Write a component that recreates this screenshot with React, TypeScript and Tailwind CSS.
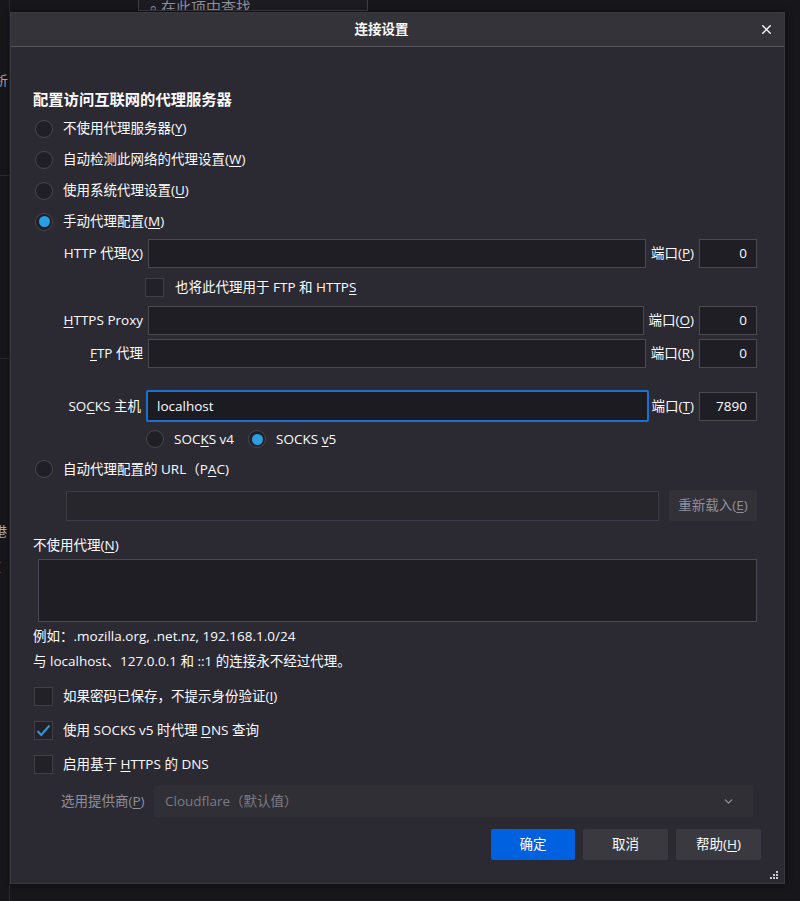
import React from "react";
import { X, ChevronDown } from "lucide-react";

const font = "font-['Open_Sans','Noto_Sans_CJK_SC',sans-serif]";

function Radio({ checked }: { checked?: boolean }) {
  return (
    <span className="flex h-[18px] w-[18px] shrink-0 items-center justify-center rounded-full border border-[#48474e] bg-[#201f26]">
      {checked && <span className="h-[11px] w-[11px] rounded-full bg-[#2a9fe4]" />}
    </span>
  );
}

function Checkbox({ checked }: { checked?: boolean }) {
  return (
    <span className="flex h-[19px] w-[19px] shrink-0 items-center justify-center border border-[#403f46] bg-[#222127]">
      {checked && (
        <svg width="15" height="13" viewBox="0 0 15 13" fill="none">
          <path d="M1.5 7 L5.2 11 L13.5 1.5" stroke="#2f97d8" strokeWidth="2" />
        </svg>
      )}
    </span>
  );
}

function Input({ value, right, className = "" }: { value?: string; right?: boolean; className?: string }) {
  return (
    <div
      className={`flex h-[29px] items-center border border-[#4a4950] bg-[#1f1e25] px-[9px] text-[13.5px] text-[#fbfbfe] ${
        right ? "justify-end" : ""
      } ${className}`}
    >
      {value}
    </div>
  );
}

function ProxyRow({
  label,
  port,
  value,
  portValue,
  focused,
  className = "",
}: {
  label: React.ReactNode;
  port: React.ReactNode;
  value?: string;
  portValue: string;
  focused?: boolean;
  className?: string;
}) {
  return (
    <div className={`flex items-center ${focused ? "h-[32px] gap-[3px]" : "h-[29px] gap-[5px]"} ${className}`}>
      <div className={`w-[110px] shrink-0 whitespace-nowrap text-right ${focused ? "pr-[2px]" : ""}`}>{label}</div>
      {focused ? (
        <div className="flex h-[32px] flex-1 items-center rounded-[2px] border-2 border-[#1d6fd0] bg-[#1c1b22] px-[9px]">
          {value}
        </div>
      ) : (
        <Input value={value} className="flex-1" />
      )}
      <div className="shrink-0 whitespace-nowrap">{port}</div>
      <Input value={portValue} right className={`w-[58px] shrink-0 ${focused ? "ml-[2px] h-[28px]" : ""}`} />
    </div>
  );
}

function U({ children }: { children: React.ReactNode }) {
  return <span className="underline underline-offset-2">{children}</span>;
}

export default function App() {
  return (
    <div className={`relative h-[901px] w-[800px] overflow-hidden bg-[#17161b] text-[13.5px] text-[#fbfbfe] ${font}`}>
      {/* page behind the dialog */}
      <div className="flex h-full">
        <div className="flex w-[10px] shrink-0 flex-col overflow-hidden border-r border-[#2a292f] text-[13px] text-[#a9a9b0]">
          <div className="mt-[72px] -ml-[5px] leading-[16px]">析</div>
          <div className="mt-[87px] h-px w-full bg-[#2b2a30]" />
          <div className="mt-[182px] h-px w-full bg-[#2b2a30]" />
          <div className="mt-[164px] -ml-[6px] leading-[16px]">港</div>
          <div className="mt-[19px] -ml-[3px] leading-[16px]">(</div>
          <div className="mt-[52px] -ml-[4px] leading-[16px] text-[#3b8ccf]">i</div>
        </div>
        <div className="flex-1">
          <div className="ml-[128px] flex h-[11px] w-[230px] items-end overflow-hidden border-x border-b border-[#3f3e45] bg-[#1c1b22] pl-[10px] text-[15px] text-[#8f8f9d]">
            <span className="-mb-[6px] leading-[18px]">⌕ 在此项中查找</span>
          </div>
        </div>
      </div>

      {/* dialog */}
      <div className="absolute left-[10px] top-[12px] flex h-[872px] w-[775px] flex-col border border-[#3a3940] bg-[#2b2a33] shadow-[0_0_6px_rgba(0,0,0,0.5)]">
        <div className="flex h-[34px] shrink-0 items-center border-b border-[#55545b] bg-[#34333a]">
          <div className="flex-1 text-center text-[13.5px] font-bold">连接设置</div>
          <div className="mr-[4px] flex w-[28px] justify-center">
            <X size={15} strokeWidth={2.2} color="#fbfbfe" />
          </div>
        </div>

        <div className="flex flex-col pl-[22px] pr-[27px]">
          <div className="mt-[42px] h-[20px] text-[15.3px] font-bold leading-[20px]">配置访问互联网的代理服务器</div>

          <div className="mt-[4px] flex flex-col">
            {[
              <>不使用代理服务器(<U>Y</U>)</>,
              <>自动检测此网络的代理设置(<U>W</U>)</>,
              <>使用系统代理设置(<U>U</U>)</>,
              <>手动代理配置(<U>M</U>)</>,
            ].map((label, i) => (
              <div key={i} className="flex h-[31px] items-center gap-[10px] pl-[2px]">
                <Radio checked={i === 3} />
                <span>{label}</span>
              </div>
            ))}
          </div>

          <ProxyRow
            className="mt-[2px]"
            label={<>HTTP 代理(<U>X</U>)</>}
            port={<>端口(<U>P</U>)</>}
            portValue="0"
          />

          <div className="flex h-[38px] items-center gap-[11px] pl-[112px]">
            <Checkbox />
            <span>
              也将此代理用于 FTP 和 HTTP<U>S</U>
            </span>
          </div>

          <ProxyRow
            label={<><U>H</U>TTPS Proxy</>}
            port={<>端口(<U>O</U>)</>}
            portValue="0"
          />
          <ProxyRow
            className="mt-[4px]"
            label={<><U>F</U>TP 代理</>}
            port={<>端口(<U>R</U>)</>}
            portValue="0"
          />
          <ProxyRow
            className="mt-[22px]"
            focused
            label={<>SO<U>C</U>KS 主机</>}
            value="localhost"
            port={<>端口(<U>T</U>)</>}
            portValue="7890"
          />

          <div className="mt-[2px] flex h-[30px] items-center pl-[113px]">
            <Radio />
            <span className="ml-[10px]">
              SOC<U>K</U>S v4
            </span>
            <span className="ml-[14px]">
              <Radio checked />
            </span>
            <span className="ml-[10px]">
              SOCKS <U>v</U>5
            </span>
          </div>

          <div className="flex h-[30px] items-center gap-[10px] pl-[2px]">
            <Radio />
            <span>
              自动代理配置的 URL（P<U>A</U>C)
            </span>
          </div>

          <div className="mt-[6px] flex h-[31px] items-center gap-[10px] pl-[33px]">
            <div className="h-[30px] flex-1 border border-[#3d3c43] bg-[#27262d]" />
            <div className="flex h-[31px] w-[88px] shrink-0 items-center justify-center rounded-[2px] bg-[#323138] text-[#8f8f9d]">
              重新载入(<U>E</U>)
            </div>
          </div>

          <div className="mt-[14px] h-[20px] leading-[20px]">
            不使用代理(<U>N</U>)
          </div>
          <div className="ml-[5px] mt-[4px] h-[63px] border border-[#4a4950] bg-[#1f1e25]" />

          <div className="mt-[2px] flex h-[25px] items-center">例如：.mozilla.org, .net.nz, 192.168.1.0/24</div>
          <div className="flex h-[25px] items-center">与 localhost、127.0.0.1 和 ::1 的连接永不经过代理。</div>

          <div className="mt-[5px] flex flex-col">
            {[
              <>如果密码已保存，不提示身份验证(<U>I</U>)</>,
              <>使用 SOCKS v5 时代理 <U>D</U>NS 查询</>,
              <>启用基于 <U>H</U>TTPS 的 DNS</>,
            ].map((label, i) => (
              <div key={i} className="flex h-[34px] items-center gap-[10px] pl-[1px]">
                <Checkbox checked={i === 1} />
                <span>{label}</span>
              </div>
            ))}
          </div>

          <div className="mr-[4px] mt-[4px] flex h-[32px] items-center text-[#8f8f9d]">
            <span className="w-[121px] shrink-0 whitespace-nowrap pl-[28px]">
              选用提供商(<U>P</U>)
            </span>
            <div className="flex h-[32px] flex-1 items-center justify-between rounded-[2px] bg-[#302f36] pl-[11px] pr-[18px] text-[#7c7b83]">
              <span>Cloudflare（默认值）</span>
              <ChevronDown size={13} strokeWidth={2.5} color="#8f8f9d" />
            </div>
          </div>

          <div className="-mr-[4px] mt-[12px] flex h-[31px] justify-end gap-[8px]">
            <div className="flex w-[84px] items-center justify-center rounded-[2px] bg-[#0061e0] text-white">确定</div>
            <div className="flex w-[85px] items-center justify-center rounded-[2px] bg-[#3a3940]">取消</div>
            <div className="flex w-[85px] items-center justify-center rounded-[2px] bg-[#3a3940]">
              帮助(<U>H</U>)
            </div>
          </div>
        </div>

        <div className="absolute bottom-[4px] right-[6px] grid grid-cols-3 gap-[1px]">
          <span className="h-[2px] w-[2px]" />
          <span className="h-[2px] w-[2px]" />
          <span className="h-[2px] w-[2px] bg-[#c9c9cf]" />
          <span className="h-[2px] w-[2px]" />
          <span className="h-[2px] w-[2px] bg-[#c9c9cf]" />
          <span className="h-[2px] w-[2px] bg-[#c9c9cf]" />
          <span className="h-[2px] w-[2px] bg-[#c9c9cf]" />
          <span className="h-[2px] w-[2px] bg-[#c9c9cf]" />
          <span className="h-[2px] w-[2px] bg-[#c9c9cf]" />
        </div>
      </div>
    </div>
  );
}
